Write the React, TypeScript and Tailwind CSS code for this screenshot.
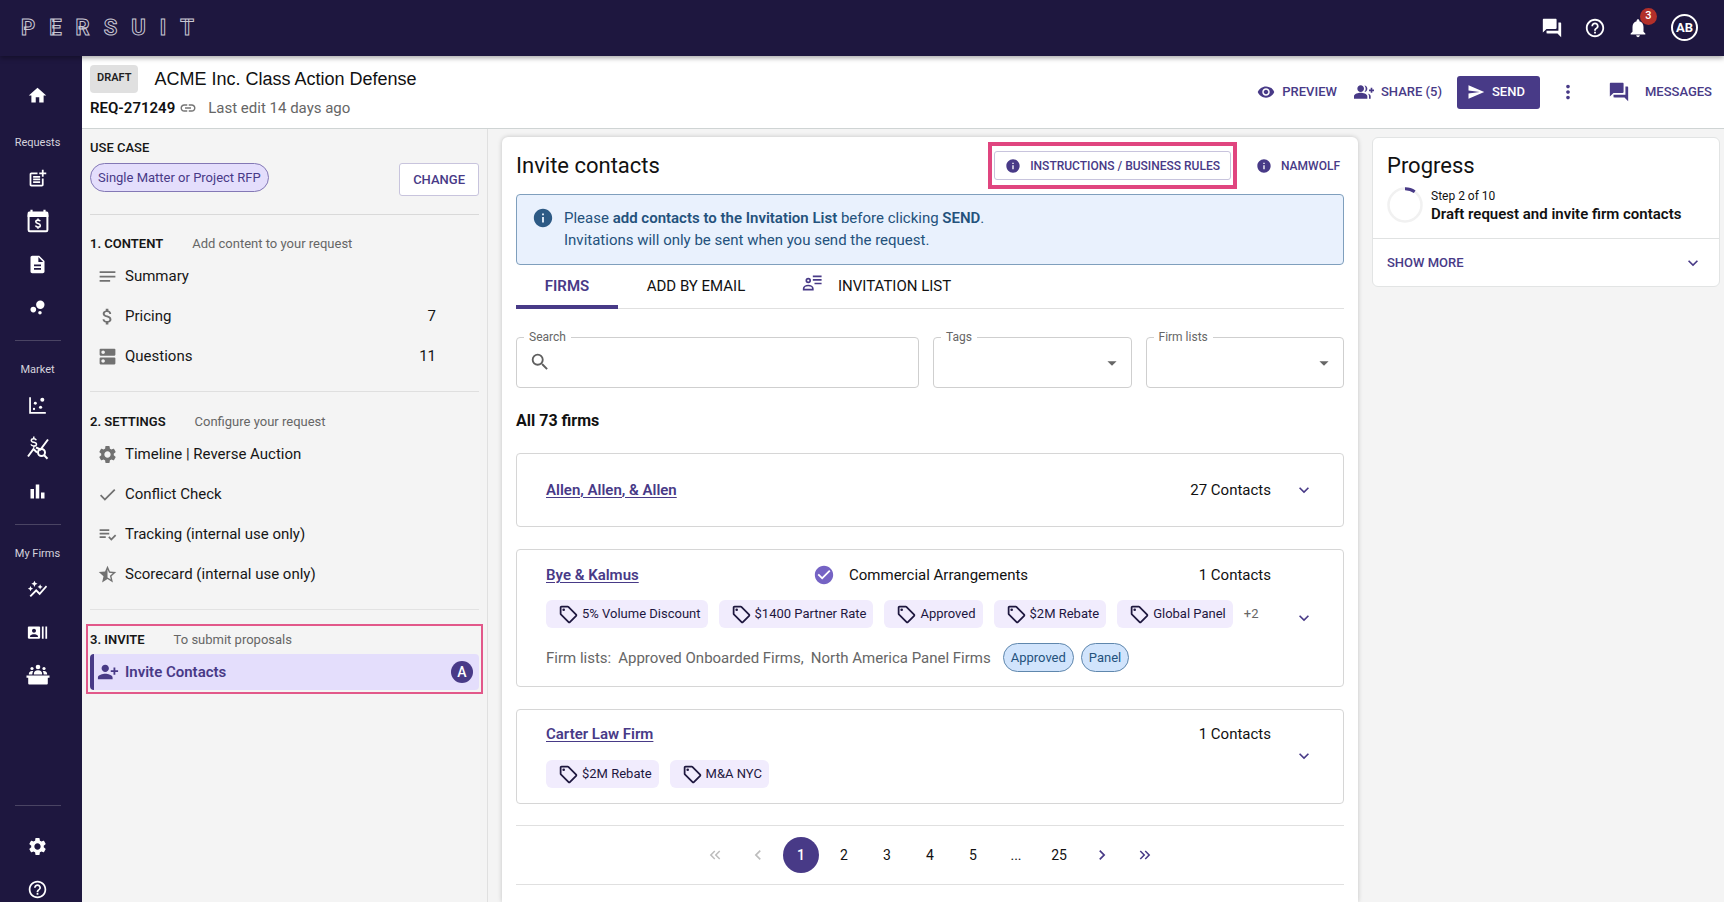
import React from "react";
import type { IconType } from "react-icons";
import {
  MdArrowDropDown,
  MdAttachMoney,
  MdAutoGraph,
  MdBarChart,
  MdBubbleChart,
  MdCheck,
  MdCheckCircle,
  MdChevronLeft,
  MdChevronRight,
  MdDescription,
  MdDns,
  MdExpandMore,
  MdForum,
  MdGroupAdd,
  MdHelpOutline,
  MdHome,
  MdInfo,
  MdKeyboardDoubleArrowLeft,
  MdKeyboardDoubleArrowRight,
  MdLink,
  MdMoreVert,
  MdNotes,
  MdNotifications,
  MdOutlineSell,
  MdPersonAddAlt1,
  MdPlaylistAddCheck,
  MdPostAdd,
  MdRecentActors,
  MdSearch,
  MdSend,
  MdSettings,
  MdStarHalf,
  MdVisibility,
} from "react-icons/md";

type IconProps = { className?: string };

function CalendarMoneyIcon({ className }: IconProps) {
  return (
    <svg viewBox="0 0 24 24" className={className} fill="none" stroke="currentColor">
      <path d="M2.6 6.5h18.8V21a1.2 1.2 0 0 1-1.2 1.2H3.800A1.2 1.2 0 0 1 2.600 21z" strokeWidth="2" />
      <path d="M1.600 4.200A1.600 1.600 0 0 1 3.200 2.600h17.600a1.600 1.600 0 0 1 1.600 1.600V8H1.600z" fill="currentColor" stroke="none" />
      <path d="M5.500 0.800v3M18.500 0.800v3" strokeWidth="2.200" />
      <path d="M14.200 12.300c-.3-.8-1-1.200-2.200-1.200-1.300 0-2.200.6-2.200 1.700 0 2.400 4.500 1.100 4.500 3.600 0 1.100-1 1.700-2.300 1.700s-2.200-.5-2.500-1.500M12 9.500v1.500M12 18.200v1.500" strokeWidth="1.600" />
    </svg>
  );
}

function ScatterIcon({ className }: IconProps) {
  return (
    <svg viewBox="0 0 24 24" className={className} fill="currentColor">
      <path d="M2.500 2.500h2v17h17v2h-19z" />
      <circle cx="9.500" cy="9.500" r="1.700" />
      <circle cx="17.500" cy="5.500" r="2.300" />
      <circle cx="15.500" cy="14" r="1.800" />
      <circle cx="8" cy="16" r="1.300" />
    </svg>
  );
}

function MoneyTrendIcon({ className }: IconProps) {
  return (
    <svg viewBox="0 0 24 24" className={className} fill="none" stroke="currentColor">
      <path d="M2 20.500 7.500 13l3.500 3.500" strokeWidth="2" />
      <path d="M10 11.500l4.500 2 7.500-10" strokeWidth="2" />
      <circle cx="15.500" cy="16.500" r="3.500" strokeWidth="2" />
      <path d="m18.200 19.200 3.300 3.500" strokeWidth="2" />
      <path d="M10.300 4.200C9.900 3.200 9 2.700 7.800 2.700c-1.500 0-2.500.6-2.500 1.700 0 2.600 5.200 1.200 5.200 3.800 0 1.200-1.100 1.800-2.700 1.800-1.500 0-2.500-.6-2.800-1.600M7.800.6v2M7.800 10v1.800" strokeWidth="1.500" />
    </svg>
  );
}

function PanelIcon({ className }: IconProps) {
  return (
    <svg viewBox="0 0 24 24" className={className} fill="currentColor">
      <circle cx="12" cy="4" r="2.300" />
      <circle cx="6" cy="5.500" r="1.600" />
      <circle cx="18" cy="5.500" r="1.600" />
      <path d="M7.800 11.500c0-2.800 1.500-4.200 4.200-4.200s4.200 1.400 4.200 4.200z" />
      <path d="M2.800 11.500c0-2.300 1.100-3.500 3.200-3.500.5 0 .9.100 1.200.2-.6.900-.9 2-.9 3.300zM21.200 11.500c0-2.300-1.100-3.500-3.200-3.500-.5 0-.9.100-1.200.2.600.9.900 2 .9 3.300z" />
      <path d="M.5 12.500h23v2.300h-1.700v5.700a1 1 0 0 1-1 1H3.200a1 1 0 0 1-1-1v-5.700H.5z" />
    </svg>
  );
}

function InviteListIcon({ className }: IconProps) {
  return (
    <svg viewBox="0 0 24 24" className={className} fill="none" stroke="currentColor" strokeWidth="2">
      <circle cx="7.500" cy="9" r="2.300" />
      <path d="M2 20v-1.500C2 16.500 4.500 15 7.500 15s5.500 1.500 5.500 3.500V20z" />
      <path d="M13 4h10.500M13 8.300h10.500M15 12.600h8.500" />
    </svg>
  );
}

function ProgressRing({ className }: IconProps) {
  return (
    <svg viewBox="0 0 36 36" className={className} fill="none">
      <circle cx="18" cy="18" r="16.500" stroke="#f1f1f1" strokeWidth="2.500" />
      <path d="M18 1.700A16.500 16.500 0 0 1 27.700 4.700" stroke="#483a87" strokeWidth="3" />
    </svg>
  );
}

type RailItem = { label: string; Icon: IconType | ((p: IconProps) => React.JSX.Element); big?: boolean };

function RailLink({ label, Icon, big }: RailItem) {
  return (
    <a href="#" aria-label={label} className="flex h-6 w-6 items-center justify-center text-white">
      <Icon className={big ? "h-6 w-6" : "h-[21px] w-[21px]"} />
    </a>
  );
}

function RailGroup({ title, items }: { title: string; items: RailItem[] }) {
  return (
    <div className="flex w-full flex-col items-center">
      <h2 className="mb-[15px] text-[11px] leading-4 text-[#d5d3dd]">{title}</h2>
      <div className="flex flex-col items-center gap-[19px]">
        {items.map((i) => (
          <RailLink key={i.label} {...i} />
        ))}
      </div>
    </div>
  );
}

function RailLine() {
  return <hr className="w-[46px] border-[#4a4463]" />;
}

function Rail() {
  return (
    <nav className="flex w-[82px] shrink-0 flex-col items-center bg-[#1e173f] pr-[7px] pt-[27px]">
      <RailLink label="Home" Icon={MdHome} />
      <div className="h-7" />
      <RailGroup
        title="Requests"
        items={[
          { label: "New request", Icon: MdPostAdd },
          { label: "Pricing calendar", Icon: CalendarMoneyIcon, big: true },
          { label: "Documents", Icon: MdDescription },
          { label: "Insights", Icon: MdBubbleChart },
        ]}
      />
      <div className="my-[21px]">
        <RailLine />
      </div>
      <RailGroup
        title="Market"
        items={[
          { label: "Scatter", Icon: ScatterIcon },
          { label: "Rate trends", Icon: MoneyTrendIcon, big: true },
          { label: "Benchmarks", Icon: MdBarChart },
        ]}
      />
      <div className="my-[21px]">
        <RailLine />
      </div>
      <RailGroup
        title="My Firms"
        items={[
          { label: "Performance", Icon: MdAutoGraph },
          { label: "Contacts", Icon: MdRecentActors },
          { label: "Panels", Icon: PanelIcon, big: true },
        ]}
      />
      <div className="mt-auto flex flex-col items-center pb-px">
        <RailLine />
        <div className="mt-7 flex flex-col gap-[19px]">
          <RailLink label="Settings" Icon={MdSettings} />
          <RailLink label="Help" Icon={MdHelpOutline} />
        </div>
      </div>
    </nav>
  );
}

function TopBar() {
  return (
    <header className="relative z-10 flex h-14 shrink-0 items-center justify-between bg-[#1e173f] pb-px pl-[21px] pr-[26px] text-white shadow-[0_2px_5px_rgba(0,0,0,0.35)]">
      <a
        href="#"
        aria-label="PERSUIT"
        className="flex gap-[14px] text-[22px] font-bold leading-6 text-[#1e173f] [-webkit-text-stroke:1px_#c9c7d3]"
      >
        {"PERSUIT".split("").map((c) => (
          <span key={c}>{c}</span>
        ))}
      </a>
      <div className="flex items-center">
        <button aria-label="Chat" className="mr-[21px]">
          <MdForum className="h-[22px] w-[22px]" />
        </button>
        <button aria-label="Help" className="mr-[21px]">
          <MdHelpOutline className="h-[22px] w-[22px]" />
        </button>
        <button aria-label="Notifications" className="relative mr-[22px]">
          <MdNotifications className="h-[22px] w-[22px]" />
          <span className="absolute -top-[9px] left-[13px] flex h-[17px] w-[17px] items-center justify-center rounded-full bg-[#b3302a] text-[11px] font-medium">
            3
          </span>
        </button>
        <button className="flex h-[27px] w-[27px] items-center justify-center rounded-full border-2 border-white text-[13px] font-bold">
          AB
        </button>
      </div>
    </header>
  );
}

function RequestHeader() {
  return (
    <div className="flex h-[73px] shrink-0 items-center justify-between border-b border-[#cfd4d4] bg-white pl-2 pr-3">
      <div className="flex flex-col gap-[5px] pb-[2px]">
        <div className="flex items-center gap-4">
          <span className="flex h-7 items-center rounded bg-[#e0e0e0] px-[7px] text-[11px] font-semibold text-[#222]">DRAFT</span>
          <h1 className="font-['Liberation_Sans',Arial,sans-serif] text-[18px] leading-6">ACME Inc. Class Action Defense</h1>
        </div>
        <div className="flex items-center text-[15px] leading-5">
          <span className="font-semibold">REQ-271249</span>
          <button aria-label="Copy link" className="ml-1 mr-[11px] text-[#757575]">
            <MdLink className="h-[18px] w-[18px]" />
          </button>
          <span className="text-[#666]">Last edit 14 days ago</span>
        </div>
      </div>
      <div className="flex items-center text-[13px] font-medium text-[#483a87]">
        <button className="mr-[17px] flex items-center gap-[7px]">
          <MdVisibility className="h-[18px] w-[18px]" />
          PREVIEW
        </button>
        <button className="mr-[15px] flex items-center gap-[7px]">
          <MdGroupAdd className="h-5 w-5" />
          SHARE (5)
        </button>
        <button className="mr-[17px] flex h-[33px] items-center gap-[7px] rounded-[3px] bg-[#483a87] pl-[10px] pr-[15px] text-white">
          <MdSend className="h-[18px] w-[18px]" />
          SEND
        </button>
        <button aria-label="More" className="mr-[29px]">
          <MdMoreVert className="h-[22px] w-[22px]" />
        </button>
        <button className="flex items-center gap-[15px]">
          <MdForum className="h-[22px] w-[22px]" />
          MESSAGES
        </button>
      </div>
    </div>
  );
}

function SectionTitle({ title, hint }: { title: string; hint: string }) {
  return (
    <div className="flex items-center gap-[29px] leading-5">
      <h2 className="text-[13px] font-semibold">{title}</h2>
      <span className="text-[13px] text-[#666]">{hint}</span>
    </div>
  );
}

function StepLink({ Icon, label, count }: { Icon: IconType; label: string; count?: number }) {
  return (
    <a href="#" className="flex h-10 items-center pl-[7px] pr-[43px]">
      <Icon className="mr-[7px] h-[21px] w-[21px] text-[#717171]" />
      <span className="flex-1">{label}</span>
      {count !== undefined && <span>{count}</span>}
    </a>
  );
}

function StepsPanel() {
  return (
    <aside className="flex w-[406px] shrink-0 flex-col border-r border-[#e0e0e0] bg-[#f4f4f4] px-2 pt-[9px] text-[15px] leading-5 text-[#161616]">
      <h2 className="text-[13px] font-medium">USE CASE</h2>
      <div className="mt-[5px] flex items-start justify-between">
        <span className="flex h-[29px] items-center rounded-full border border-[#8378b5] bg-[#e4defc] px-[7px] text-[13px] text-[#483a87]">
          Single Matter or Project RFP
        </span>
        <button className="h-[33px] rounded-[3px] border border-[#c8c4dd] bg-white px-[13px] text-[13px] font-medium text-[#483a87]">
          CHANGE
        </button>
      </div>
      <hr className="mt-[18px] border-[#d9d9d9]" />
      <section className="pb-[15px] pt-[19px]">
        <SectionTitle title="1. CONTENT" hint="Add content to your request" />
        <div className="mt-[2px]">
          <StepLink Icon={MdNotes} label="Summary" />
          <StepLink Icon={MdAttachMoney} label="Pricing" count={7} />
          <StepLink Icon={MdDns} label="Questions" count={11} />
        </div>
      </section>
      <hr className="border-[#dfdfdf]" />
      <section className="pb-[15px] pt-5">
        <SectionTitle title="2. SETTINGS" hint="Configure your request" />
        <div className="mt-[2px]">
          <StepLink Icon={MdSettings} label="Timeline | Reverse Auction" />
          <StepLink Icon={MdCheck} label="Conflict Check" />
          <StepLink Icon={MdPlaylistAddCheck} label="Tracking (internal use only)" />
          <StepLink Icon={MdStarHalf} label="Scorecard (internal use only)" />
        </div>
      </section>
      <hr className="border-[#e2e2e2]" />
      <section className="-mx-1 mt-[14px] border-2 border-[#e2588a] px-[2px] pb-[2px] pt-1">
        <SectionTitle title="3. INVITE" hint="To submit proposals" />
        <a
          href="#"
          aria-current="page"
          className="mt-1 flex h-9 items-center rounded border-l-4 border-[#483a87] bg-[#e4defc] pl-[3px] pr-[6px] font-semibold text-[#483a87]"
        >
          <MdPersonAddAlt1 className="mr-[6px] h-[22px] w-[22px]" />
          <span className="flex-1">Invite Contacts</span>
          <span className="flex h-[22px] w-[22px] items-center justify-center rounded-full bg-[#483a87] text-[14px] font-medium text-white">A</span>
        </a>
      </section>
    </aside>
  );
}

function SelectField({ id, label }: { id: string; label: string }) {
  return (
    <fieldset className="relative h-[59px] min-w-0 flex-1 rounded border border-[#cfcfcf]">
      <legend className="ml-[7px] px-[5px] text-[12px] leading-4 text-[#666]">
        <label htmlFor={id}>{label}</label>
      </legend>
      <select id={id} className="h-9 w-full appearance-none bg-transparent px-3 outline-none">
        <option value=""></option>
      </select>
      <MdArrowDropDown className="pointer-events-none absolute right-2 top-[7px] h-[22px] w-[22px] text-[#666]" />
    </fieldset>
  );
}

function Tag({ label }: { label: string }) {
  return (
    <span className="flex h-7 items-center gap-[3px] rounded-md bg-[#f1ecfd] pl-3 pr-[7px] text-[13px] text-[#1e173f]">
      <MdOutlineSell className="h-[21px] w-[21px]" />
      {label}
    </span>
  );
}

function Pill({ label }: { label: string }) {
  return (
    <span className="flex h-[29px] items-center rounded-full border border-[#5f87ad] bg-[#d1e4fc] px-[7px] text-[13px] text-[#24527c]">
      {label}
    </span>
  );
}

function ExpandButton({ firm }: { firm: string }) {
  return (
    <button aria-label={`Expand ${firm}`} className="mr-[29px] shrink-0 text-[#483a87]">
      <MdExpandMore className="h-5 w-5" />
    </button>
  );
}

function FirmLink({ name }: { name: string }) {
  return (
    <a href="#" className="font-semibold text-[#483a87] underline underline-offset-2">
      {name}
    </a>
  );
}

function Firms() {
  return (
    <ul className="text-[15px] leading-5">
      <li className="flex h-[74px] items-center rounded border border-[#d6d6d6] pl-[29px]">
        <div className="mr-[23px] flex flex-1 justify-between">
          <FirmLink name="Allen, Allen, & Allen" />
          <span>27 Contacts</span>
        </div>
        <ExpandButton firm="Allen, Allen, & Allen" />
      </li>

      <li className="mt-[22px] flex items-center rounded border border-[#d6d6d6] pb-[14px] pl-[29px] pt-[14px]">
        <div className="mr-[23px] flex-1">
          <div className="grid grid-cols-[267px_1fr_auto] items-center">
            <FirmLink name="Bye & Kalmus" />
            <span className="flex items-center gap-[14px]">
              <MdCheckCircle className="h-[22px] w-[22px] text-[#7563c4]" />
              Commercial Arrangements
            </span>
            <span>1 Contacts</span>
          </div>
          <div className="mt-[14px] flex items-center gap-[11px]">
            <Tag label="5% Volume Discount" />
            <Tag label="$1400 Partner Rate" />
            <Tag label="Approved" />
            <Tag label="$2M Rebate" />
            <Tag label="Global Panel" />
            <span className="text-[13px] text-[#666]">+2</span>
          </div>
          <div className="mt-[15px] flex items-center text-[#666]">
            <span className="mr-[7px]">Firm lists:</span>
            <span className="mr-[7px]">Approved Onboarded Firms,</span>
            <span className="mr-3">North America Panel Firms</span>
            <span className="flex gap-[7px]">
              <Pill label="Approved" />
              <Pill label="Panel" />
            </span>
          </div>
        </div>
        <ExpandButton firm="Bye & Kalmus" />
      </li>

      <li className="mt-[22px] flex items-center rounded border border-[#d6d6d6] pb-[15px] pl-[29px] pt-[14px]">
        <div className="mr-[23px] flex-1">
          <div className="flex justify-between">
            <FirmLink name="Carter Law Firm" />
            <span>1 Contacts</span>
          </div>
          <div className="mt-4 flex items-center gap-[11px]">
            <Tag label="$2M Rebate" />
            <Tag label="M&A NYC" />
          </div>
        </div>
        <ExpandButton firm="Carter Law Firm" />
      </li>
    </ul>
  );
}

function Pagination() {
  const cell = "flex h-9 w-9 items-center justify-center rounded-full";
  return (
    <nav aria-label="Pages" className="mt-[21px] flex justify-center gap-[7px] border-y border-[#e0e0e0] py-[11px] text-[14px]">
      <button aria-label="First page" disabled className={`${cell} text-[#bdbdbd]`}>
        <MdKeyboardDoubleArrowLeft className="h-[18px] w-[18px]" />
      </button>
      <button aria-label="Previous page" disabled className={`${cell} text-[#bdbdbd]`}>
        <MdChevronLeft className="h-5 w-5" />
      </button>
      <button aria-current="page" className={`${cell} bg-[#483a87] font-medium text-white`}>1</button>
      {["2", "3", "4", "5"].map((n) => (
        <button key={n} className={cell}>{n}</button>
      ))}
      <span className={cell}>...</span>
      <button className={cell}>25</button>
      <button aria-label="Next page" className={`${cell} text-[#483a87]`}>
        <MdChevronRight className="h-5 w-5" />
      </button>
      <button aria-label="Last page" className={`${cell} text-[#483a87]`}>
        <MdKeyboardDoubleArrowRight className="h-[18px] w-[18px]" />
      </button>
    </nav>
  );
}

function InviteCard() {
  return (
    <main className="min-w-0 flex-1 rounded-t-md bg-white px-[14px] pt-[5px] shadow-[0_0_5px_rgba(0,0,0,0.2)]">
      <div className="flex h-[47px] items-center justify-between">
        <h2 className="text-[22px] leading-7">Invite contacts</h2>
        <div className="flex items-center text-[12px] font-medium text-[#483a87]">
          <div className="border-4 border-[#e0457f] px-[2px] py-[5px]">
            <button className="flex h-[29px] items-center gap-[9px] rounded-[3px] border border-[#c8c4dd] px-[10px]">
              <MdInfo className="h-4 w-4" />
              INSTRUCTIONS / BUSINESS RULES
            </button>
          </div>
          <button className="ml-[19px] mr-1 flex items-center gap-[9px]">
            <MdInfo className="h-4 w-4" />
            NAMWOLF
          </button>
        </div>
      </div>

      <div role="status" className="mt-[5px] flex h-[71px] gap-[10px] rounded border border-[#7f9fbd] bg-[#e9f1fd] pl-[15px] pt-3 text-[15px] leading-[22px] text-[#24527c]">
        <MdInfo className="h-[22px] w-[22px] text-[#2d5a85]" />
        <p>
          Please <b className="font-semibold">add contacts to the Invitation List</b> before clicking <b className="font-semibold">SEND</b>.
          <br />
          Invitations will only be sent when you send the request.
        </p>
      </div>

      <div role="tablist" className="flex h-11 border-b border-[#e0e0e0] text-[15px]">
        <button role="tab" aria-selected="true" className="-mb-px w-[102px] border-b-4 border-[#483a87] pt-[3px] font-semibold text-[#483a87]">
          FIRMS
        </button>
        <button role="tab" aria-selected="false" className="w-[156px]">ADD BY EMAIL</button>
        <button role="tab" aria-selected="false" className="flex items-center gap-4 pl-7">
          <InviteListIcon className="mb-2 h-5 w-5 text-[#483a87]" />
          INVITATION LIST
        </button>
      </div>

      <div className="mt-5 flex gap-[14px]">
        <fieldset className="flex h-[59px] w-[403px] shrink-0 items-center rounded border border-[#cfcfcf]">
          <legend className="ml-[7px] px-[5px] text-[12px] leading-4 text-[#666]">
            <label htmlFor="firm-search">Search</label>
          </legend>
          <MdSearch className="mb-2 ml-3 h-[22px] w-[22px] text-[#5f5f5f]" />
          <input id="firm-search" type="text" className="h-9 min-w-0 flex-1 bg-transparent px-2 outline-none" />
        </fieldset>
        <SelectField id="firm-tags" label="Tags" />
        <SelectField id="firm-lists" label="Firm lists" />
      </div>

      <h3 className="mb-5 mt-[21px] text-[16px] font-bold leading-6">All 73 firms</h3>
      <Firms />
      <Pagination />
    </main>
  );
}

function ProgressCard() {
  return (
    <aside className="w-[348px] shrink-0 self-start rounded-md border border-[#e2e4e4] bg-white">
      <div className="h-[101px] border-b border-[#e0e2e2] pl-[14px] pt-[14px]">
        <h2 className="text-[22px] leading-7">Progress</h2>
        <div className="mt-[7px] flex items-start gap-2">
          <ProgressRing className="h-9 w-9" />
          <div>
            <p className="text-[12px] leading-[18px]">Step 2 of 10</p>
            <p className="text-[15px] font-semibold leading-[18px]">Draft request and invite firm contacts</p>
          </div>
        </div>
      </div>
      <button className="flex h-[47px] w-full items-center justify-between pl-[14px] pr-4 text-[13px] font-medium text-[#483a87]">
        SHOW MORE
        <MdExpandMore className="h-5 w-5" />
      </button>
    </aside>
  );
}

export default function App() {
  return (
    <div className="flex h-screen flex-col overflow-hidden bg-[#f4f4f4] font-[Roboto,sans-serif] text-[#111]">
      <TopBar />
      <div className="flex min-h-0 flex-1">
        <Rail />
        <div className="flex min-w-0 flex-1 flex-col">
          <RequestHeader />
          <div className="flex min-h-0 flex-1">
            <StepsPanel />
            <div className="flex min-w-0 flex-1 gap-[14px] pl-[14px] pr-1 pt-2">
              <InviteCard />
              <ProgressCard />
            </div>
          </div>
        </div>
      </div>
    </div>
  );
}
